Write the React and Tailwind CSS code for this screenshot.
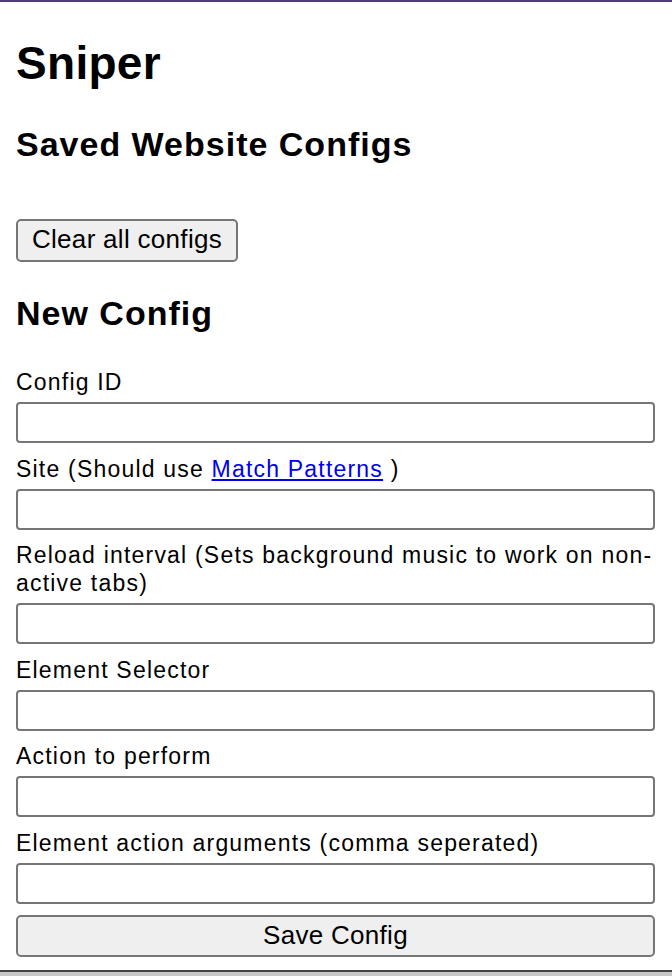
import { useState } from "react";

const fields = [
  { id: "configId", label: "Config ID" },
  { id: "site", label: "site" },
  { id: "reload", label: "reload" },
  { id: "selector", label: "Element Selector" },
  { id: "action", label: "Action to perform" },
  { id: "args", label: "Element action arguments (comma seperated)" },
];

function FieldLabel({ field }) {
  if (field.label === "site") {
    return (
      <label htmlFor={field.id} className="block leading-[28px]">
        Site (Should use{" "}
        <a href="#" className="text-[#0000ee] underline">
          Match Patterns
        </a>{" "}
        )
      </label>
    );
  }
  if (field.label === "reload") {
    return (
      <label htmlFor={field.id} className="block leading-[28px] whitespace-nowrap">
        Reload interval (Sets background music to work on non-
        <br />
        active tabs)
      </label>
    );
  }
  return (
    <label htmlFor={field.id} className="block leading-[28px]">
      {field.label}
    </label>
  );
}

export default function App() {
  const [values, setValues] = useState({});

  const handleChange = (id) => (e) => {
    setValues((prev) => ({ ...prev, [id]: e.target.value }));
  };

  return (
    <div className="min-h-[976px] bg-white text-black font-['Liberation_Sans',Arial,sans-serif] flex flex-col">
      <div className="h-[2px] bg-[#4e3d76]" />
      <div className="pl-[16px] pr-[17px]">
        <h1 className="mt-[35px] text-[46px] leading-[52px] font-bold tracking-[0.3px]">Sniper</h1>
        <h2 className="mt-[35px] text-[34px] leading-[40px] font-bold tracking-[1px]">
          Saved Website Configs
        </h2>
        <button className="mt-[55px] w-[222px] h-[43px] flex items-center justify-center pb-[3px] bg-[#efefef] border-2 border-[#767676] rounded-[5px] text-[26px] tracking-[0.3px]">
          Clear all configs
        </button>
        <h2 className="mt-[31px] text-[34px] leading-[40px] font-bold tracking-[1px]">New Config</h2>

        {/* form fields */}
        <div className="mt-[35px] text-[23px] tracking-[1.2px]">
          {fields.map((field) => (
            <div key={field.id} className="mb-[11.5px]">
              <FieldLabel field={field} />
              <input
                id={field.id}
                value={values[field.id] || ""}
                onChange={handleChange(field.id)}
                className="mt-[6px] block w-full h-[41px] bg-white border-2 border-[#767676] rounded-[4px] px-2 outline-none"
              />
            </div>
          ))}
          <button className="w-full h-[42px] flex items-center justify-center pb-[2px] bg-[#efefef] border-2 border-[#767676] rounded-[5px] text-[26px] tracking-[0.3px]">
            Save Config
          </button>
        </div>
      </div>
      <div className="mt-[13px] h-[2px] bg-[#444444]" />
      <div className="grow bg-[#c8c8c8]" />
    </div>
  );
}
